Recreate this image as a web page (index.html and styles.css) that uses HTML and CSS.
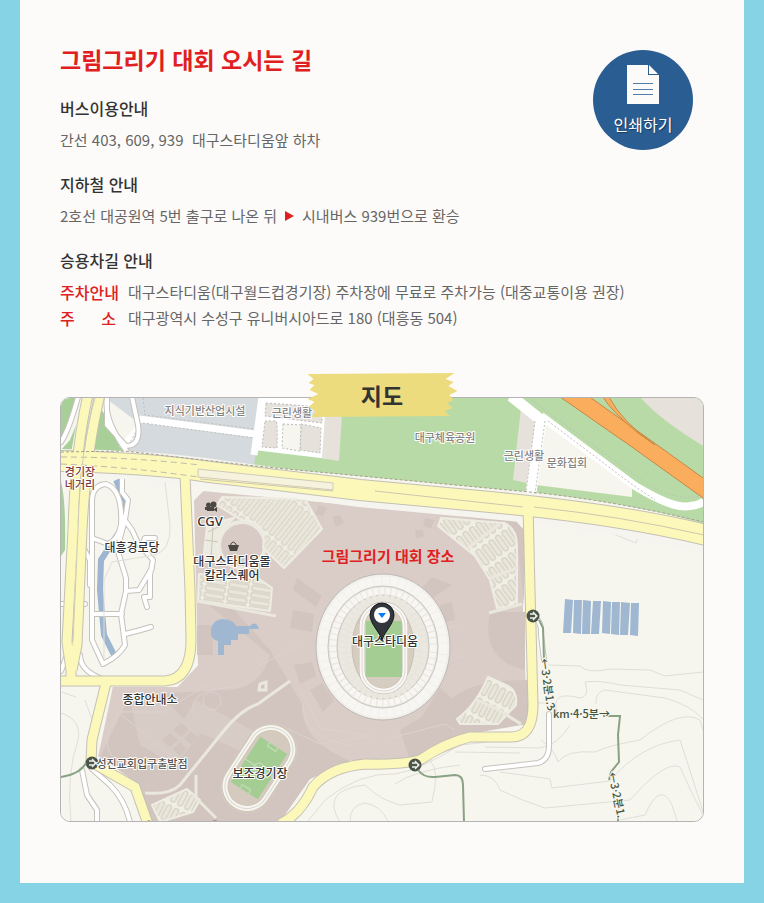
FILE: index.html
```html
<!DOCTYPE html>
<html lang="ko">
<head>
<meta charset="utf-8">
<meta name="viewport" content="width=device-width, initial-scale=1">
<title>그림그리기 대회 오시는 길</title>
<link rel="stylesheet" href="styles.css">
</head>
<body>
<main class="page">
  <div class="intro">
    <div class="intro-text">
      <h1>그림그리기 대회 오시는 길</h1>
      <section class="route">
        <h2>버스이용안내</h2>
        <p>간선 403, 609, 939&nbsp; 대구스타디움앞 하차</p>
      </section>
      <section class="route">
        <h2>지하철 안내</h2>
        <p class="steps"><span>2호선 대공원역 5번 출구로 나온 뒤</span><svg class="arrow" viewBox="0 0 9 10" aria-hidden="true"><path d="M0 0L9 5L0 10Z"/></svg><span>시내버스 939번으로 환승</span></p>
      </section>
    </div>
    <button class="print" type="button">
      <svg class="print-icon" viewBox="0 0 32 39" aria-hidden="true">
        <path class="sheet" d="M0 0H21V10H32V39H0Z"/>
        <path class="sheet" d="M22 0L31 9H22Z"/>
        <path class="rules" d="M6 18.5H26M6 24.5H26M6 29.5H26"/>
      </svg>
      <span>인쇄하기</span>
    </button>
  </div>
  <section class="route">
    <h2>승용차길 안내</h2>
    <dl>
      <dt>주차안내</dt><dd>대구스타디움(대구월드컵경기장) 주차장에 무료로 주차가능 (대중교통이용 권장)</dd>
      <dt class="spread"><span>주</span><span>소</span></dt><dd>대구광역시 수성구 유니버시아드로 180 (대흥동 504)</dd>
    </dl>
  </section>

  <section class="map">
    <div class="tape">
      <svg viewBox="0 0 151 44" aria-hidden="true"><path d="M1 1L148 0L139 6L147 9L142 13L151 18L143 22L147 27L141 30L146 35L138 38L143 43L5 44L9 38L2 34L8 29L1 26L12 21L3 17L8 12L2 10L7 6Z"/></svg>
      <h2>지도</h2>
    </div>
    <svg class="canvas" viewBox="61 398 642 423" role="img" aria-label="대구스타디움 지도">
      <defs>
        <pattern id="lot-a" width="8" height="44" patternUnits="userSpaceOnUse" patternTransform="translate(222 498) rotate(38)"><rect width="8" height="44" fill="#f0efe5"/><rect x="2" y="2" width="5" height="41" rx="1" fill="#e9e6da" stroke="#d2ccbe"/></pattern>
        <pattern id="lot-b" width="23" height="7" patternUnits="userSpaceOnUse" patternTransform="translate(206 577) rotate(9)"><rect width="23" height="7" fill="#f0efe5"/><rect x="1" y="1" width="20" height="5" rx="1" fill="#e9e6da" stroke="#cdc6b8"/></pattern>
        <pattern id="lot-c" width="8" height="22" patternUnits="userSpaceOnUse" patternTransform="translate(440 520) rotate(-36)"><rect width="8" height="22" fill="#f0efe5"/><rect x="2" y="2" width="5" height="18" rx="2" fill="#e9e6da" stroke="#cdc6b8"/></pattern>
        <pattern id="lot-d" width="8" height="20" patternUnits="userSpaceOnUse" patternTransform="translate(487 677) rotate(28)"><rect width="8" height="20" fill="#f0efe5"/><rect x="2" y="2" width="5" height="16" rx="2" fill="#e9e6da" stroke="#cdc6b8"/></pattern>
        <g id="turn"><circle r="6.5" fill="#4b5449"/><path d="M-3-2H2Q4 0 2 2H-3M0-4L4 0L0 4" fill="none" stroke="#eef0e8" stroke-width="1.3"/></g>
      </defs>

      <rect class="land" x="60" y="397" width="645" height="426"/>

      <!-- parks and blocks north of the main road -->
      <path class="park" d="M246 397H705V524Q640 505 540 493L254 466Z"/>
      <path class="block" d="M104 397H264L254 466L122 453L140 424Z"/>
      <path class="park-deep" d="M61 397H77Q72 430 61 442ZM61 450L70 440L76 425L71 453H61ZM97 424L120 453L90 454ZM95 430L102 410L125 453H92ZM61 482Q66 500 65 550L61 556Z"/>
      <path class="white" d="M262 397H343L337 460L254 450Z"/>
      <path class="tan" d="M333 400H343L339 461L322 458L326 400Z"/>
      <path class="tan dotted" d="M266 403L322 407V423L265 416ZM265 421H276Q278 424 277 448L262 447ZM301 424L321 428L320 453L300 450Z"/>
      <path class="land dotted" d="M283 424L301 425L300 451L282 448Z"/>
      <path class="white-road w7" d="M139 419L255 434M262 397L254 455"/>
      <path class="white" d="M138 424L133 440L125 452L119 446Z"/>
      <path class="dash-line" d="M143 398L145 415L255 429M143 423L254 438M125 452L140 424"/>
      <path class="tan" d="M521 408L538 422L527 483L513 480Z"/>
      <path class="tan" d="M640 397Q660 420 705 447V397Z"/>
      <path class="land" d="M545 421L632 487V497L536 485Z"/>
      <path class="white-road w11" d="M511 396L541 420L531 493"/>
      <path class="white-road w8" d="M541 416L635 486Q675 510 690 506Q700 505 704 501"/>
      <path class="dash-line" d="M535 421L526 492M545 421L535 494M548 421L630 483L655 500M527 397L644 482Q675 503 704 495"/>
      <path class="highway-edge" d="M553 392L632 447L710 503L710 483L660 447L580 390Z"/>
      <path class="highway-edge" d="M609 397Q622 422 655 445L638 433Q611 411 603 397Z"/>

      <!-- local roads in the west -->
      <path class="stream" d="M116 480L126 502L124 525L114 540L101 560L100 590L104 635L115 657"/>
      <g class="case"><path id="w1" d="M78 397Q69 430 61 442M107 397Q103 420 128 453M107 397V425L126 446Q141 446 138 425L132 397M125 446L124 455M122 478V492L128 500L125 520L119 542M92 538L108 544Q118 540 121 525Q123 490 106 484Q93 485 92 500V640L103 664Q119 656 125 645L121 614L126 591V578L116 545M125 634L137 631L151 627M121 515L132 530L138 543L153 560L150 575V597H144L147 607M155 538H145L142 545M126 591L139 590L152 568M92 614H122M84 549L90 560V585M61 604H85M61 671L67 655M80 655Q80 670 100 678M82 770L87 795L97 810V822M91 768L110 785Q125 800 130 822"/></g>
      <g class="case-in"><use href="#w1"/></g>
      <path class="thin" d="M165 482L170 525Q171 550 155 555L112 562L104 580V660M62 692L76 697M61 713Q82 720 78 740Q66 775 71 822M85 700L94 725"/>

      <!-- stadium district -->
      <path class="district" d="M193 500L203 490L330 502L516 520L524 530V610L528 724L475 733Q440 745 410 761H350L310 780L280 822H150L138 784L97 757L112 686H177L197 665Z"/>
      <path class="shade" d="M195 600L205 602L270 655Q260 690 225 690L130 695L100 757L140 785L150 822H280L310 779L350 761Q300 740 302 704L270 650L230 605ZM197 625H213V655H197ZM410 761Q470 748 480 732L528 724V680Q470 680 450 700L400 730ZM490 612H525V670Q480 660 490 612ZM437 512L515 520L524 530V605L517 540L505 525Z"/>
      <path class="light" d="M130 700H165L200 735L175 765L140 745ZM196 700L270 740L258 758L180 725Z"/>
      <path class="shade" d="M170 733L178 740L170 747L162 740ZM181 723L189 730L181 737L173 730ZM191 731L198 738L191 745L184 738ZM180 742L187 749L180 756L173 749Z"/>
      <path class="shade" d="M297 578L322 596L316 607L293 590ZM293 610L314 614L312 632L290 628ZM294 665L312 662L316 676L300 684ZM310 690L322 683L334 700L323 712ZM432 577L420 590L430 600L452 585ZM440 605L452 602L455 620L443 623ZM440 688L420 720L436 730L458 705ZM319 505l8 3l-4 8l-8-2ZM332 517l8-2l4 8l-8 4ZM425 518l9 2l-3 9l-8-3ZM415 530l8 0l1 7l-8 1Z"/>
      <path class="path-line" d="M118 715Q100 740 112 756M118 712L170 755M120 712H165L205 685M196 715Q185 700 210 690L240 686M300 690L320 728L370 736L320 744L280 725M303 704Q302 738 350 745M390 738L445 724L455 730M260 665L300 645M424 650L465 657M438 630L460 625"/>
      <circle class="path-line" cx="212" cy="701" r="9"/>
      <path class="pond" d="M211 632Q211 620 223 619Q234 620 236 626L250 626Q256 620 259 629H249V634H238V640H231V645H224V655H218V641Q211 640 211 632Z"/>
      <circle cx="242" cy="545" r="23" fill="#d8cac5" stroke="#eceae0" stroke-width="4"/>
      <path class="lot" fill="url(#lot-a)" d="M222 497L305 499L322 529L284 568L263 548Q268 520 241 520L217 505Z"/>
      <path class="lot" fill="#ecebe0" d="M207 525L221 521L234 518Q220 530 217 545L219 562H203Z"/>
      <path class="path-dark" d="M213 527L211 559M205 540L218 542M208 532L220 526"/>
      <path class="lot" fill="url(#lot-b)" d="M199 574L258 578L272 588L270 611L198 601Z"/>
      <path class="beige" d="M197 601L276 616"/>
      <path class="lot" fill="url(#lot-c)" d="M441 518L505 523Q517 530 517 545V606L497 608L490 580L475 556L438 526Z"/>
      <path class="beige" d="M489 613L522 604M468 548L498 525M490 578L517 568"/>
      <path class="lot" fill="url(#lot-d)" d="M488 677L506 685Q518 690 516 705L498 724H460L457 719Q476 705 488 677Z"/>
      <path class="beige" d="M475 699L497 709L521 724"/>
      <path class="lot" fill="url(#lot-d)" d="M152 805L187 789L200 800L193 812L160 822Z"/>
      <path class="beige" d="M145 793Q170 795 180 785L222 733Q240 710 258 704L290 681M196 775V798L216 818"/>
      <path class="beige" d="M260 684L266 682V690H259Z"/>

      <!-- auxiliary field -->
      <g transform="translate(259 768) rotate(33)">
        <rect x="-26" y="-49" width="52" height="98" rx="26" fill="#d4cabd"/>
        <rect x="-22" y="-44" width="44" height="88" rx="22" fill="#d4cabd" stroke="#c5bfb0" stroke-width="6"/>
        <rect x="-22" y="-44" width="44" height="88" rx="22" fill="none" stroke="#f6f5f0" stroke-width="5"/>
        <rect x="-22" y="-44" width="44" height="88" rx="22" fill="none" stroke="#dcd8ce"/>
        <rect class="field" x="-16" y="-27" width="32" height="54"/>
        <path d="M-16 0H16M-5-27V-23H5V-27M-5 27V23H5V27" fill="none" stroke="#c5dfb9"/><circle r="5" fill="none" stroke="#c5dfb9"/>
      </g>

      <!-- main stadium -->
      <ellipse cx="383" cy="647" rx="67" ry="73" fill="#f1f0ec" stroke="#bdb9b2"/>
      <ellipse class="seats" cx="383" cy="647" rx="60" ry="66" stroke-width="9" stroke-dasharray="7 1"/>
      <ellipse class="ring" cx="383" cy="647" rx="55" ry="61"/>
      <ellipse class="seats" cx="383" cy="647" rx="50" ry="56" stroke-width="7" stroke-dasharray="5 1"/>
      <ellipse class="ring" cx="383" cy="647" rx="46" ry="52"/>
      <ellipse class="seats deep" cx="383" cy="647" rx="41" ry="50" stroke-width="6" stroke-dasharray="4 2"/>
      <ellipse class="seats deep" cx="383" cy="647" rx="34" ry="45" stroke-width="5" stroke-dasharray="3 2"/>
      <ellipse cx="383" cy="647" rx="31" ry="45" fill="#d6ccbf" stroke="#c8c0b4"/>
      <rect x="362" y="605" width="43" height="86" rx="21" fill="#d6ccbf" stroke="#bfb9ad" stroke-width="6"/>
      <rect x="362" y="605" width="43" height="86" rx="21" fill="none" stroke="#f8f7f4" stroke-width="5"/>
      <rect x="362" y="605" width="43" height="86" rx="21" fill="none" stroke="#dedad2"/>
      <rect class="field" x="366" y="621" width="36" height="56"/>

      <!-- eastern lots and hills -->
      <path class="solar" d="M565 599l8 1l-2 33l-8 0ZM574 600l8 0l-1 34l-8-1ZM583 600l8 1l-1 33l-8 0ZM593 601l8 0l-2 33l-8 0ZM603 601l8 1l-1 32l-8-1ZM612 602l8 0l-1 33l-8-1ZM621 602l9 1l-2 32l-8 0ZM631 603l8 0l-1 33l-8-1Z"/>
      <path class="thin" d="M548 665L580 666Q588 674 610 669L650 670L665 676L703 672M557 712Q550 690 580 698Q590 697 585 682Q600 680 620 685L680 690L703 700M596 704Q595 692 605 690L665 698Q690 705 703 719M545 703H530V725Q520 740 460 745Q420 770 395 774Q360 772 325 800L308 821M541 740Q555 750 558 762Q565 750 595 752Q610 745 640 740Q680 708 700 720L703 730M500 772L550 779L552 788L610 781Q640 745 680 740Q690 770 703 812M480 775Q495 775 500 790Q520 800 545 808L630 800Q665 760 680 767Q690 790 703 815M620 820L645 815Q660 780 672 805L677 821M340 822Q320 790 365 785Q380 800 400 805L432 802Q440 770 430 760M350 821Q350 805 365 803Q380 805 388 821M600 528L603 530L636 543L638 536L704 551M395 784Q415 770 460 765"/>
      <path class="thin" d="M485 747L540 748Q558 745 570 725M455 752L520 753"/>
      <g class="case"><path id="w2" d="M485 769L538 763Q550 760 549 743V714M533 617Q542 620 541 635L544 660"/></g>
      <g class="case-in"><use href="#w2"/></g>

      <!-- arterial roads -->
      <path class="road-bed" d="M60 463Q150 464 220 474L360 493L490 505Q620 517 706 540"/>
      <g class="road-edge"><path class="w22" d="M60 461Q150 463 210 472L360 490L490 502Q620 514 706 535"/><path class="w11" d="M89 390Q75 450 73 530L67 642L71 670V680M101 390Q86 450 82 530L77 645L72 670M185 475L190 590L191 640Q191 679 165 681H60M106 683L92 740L91 762L135 787L148 824M528 505L530 590L533 705Q533 738 510 737H470Q445 743 420 760Q400 765 365 764Q330 767 313 787Q300 815 280 824"/></g>
      <g class="road"><path class="w20" d="M60 461Q150 463 210 472L360 490L490 502Q620 514 706 535"/><path class="w9" d="M89 390Q75 450 73 530L67 642L71 670V680M101 390Q86 450 82 530L77 645L72 670M185 475L190 590L191 640Q191 679 165 681H60M106 683L92 740L91 762L135 787L148 824M528 505L530 590L533 705Q533 738 510 737H470Q445 743 420 760Q400 765 365 764Q330 767 313 787Q300 815 280 824"/></g>
      <path class="lane" d="M61 457Q130 457 200 465M61 464Q130 467 198 477"/>
      <path class="lane-split" d="M95 398Q80 450 78 530L73 642"/>
      <path class="land-strip" d="M198 469L333 483V490L198 477Z"/>
      <path class="center" d="M200 479L333 491M375 491L523 507M534 507Q620 516 704 535"/>
      <path class="dash-brown" d="M61 452L125 451L255 466L540 493Q620 502 704 522"/>
      <use href="#turn" x="533" y="616"/><use href="#turn" x="92" y="763"/><use href="#turn" x="415" y="765"/>

      <!-- walking trail -->
      <path class="trail" d="M539 620L543 628L544 660M603 716H620L618 735L619 762L611 772L609 780M618 815V822M86 763Q80 774 61 777M418 770Q424 778 435 777L455 775Q463 775 463 785L464 822"/>
      <g class="trail-text">
        <text transform="translate(540 659) rotate(82)">←3·2분1.</text>
        <text transform="translate(546 707) rotate(50)">3</text>
        <text x="553" y="718">km·4·5분→</text>
        <text transform="translate(608 773) rotate(78)">←3·2분1.</text>
      </g>

      <g class="poi" text-anchor="middle">
        <g class="muted"><text x="205" y="415">지식기반산업시설</text><text x="292" y="417">근린생활</text><text x="445" y="442">대구체육공원</text><text x="524" y="460">근린생활</text><text x="567" y="467">문화집회</text></g>
        <g class="cross"><text x="80" y="476">경기장</text><text x="80" y="489">네거리</text></g>
        <text x="132" y="552">대흥경로당</text>
        <text class="latin" x="210" y="526">CGV</text>
        <text x="232" y="566">대구스타디움몰</text><text x="232" y="580">칼라스퀘어</text>
        <text x="150" y="704">종합안내소</text>
        <text x="260" y="778">보조경기장</text>
        <text x="385" y="646">대구스타디움</text>
        <text class="start" x="142" y="768">성진교회입구출발점</text>
      </g>
      <g fill="#4b4844"><circle cx="208.500" cy="505" r="2.500"/><circle cx="213.500" cy="504.500" r="3"/><path d="M207 507H214V509L217 507V512L214 510V511H207ZM205 507h2v3h-2Z"/><path d="M228 545H239L237 551H230Z"/><path d="M230 546Q233 538 237 546" fill="none" stroke="#4b4844"/></g>
      <text class="venue" x="388" y="562" text-anchor="middle">그림그리기 대회 장소</text>
      <path d="M382 640C380 632 370 624 370 615A12 12 0 0 1 394 615C394 624 384 632 382 640Z" fill="#33363b" stroke="#15171a"/>
      <circle cx="382" cy="615" r="8" fill="#fff"/><path d="M378 613H386L382 618Z" fill="#087cf5"/>
      <path d="M144 823Q149 818 154 823ZM208 823Q215 818 222 823Z" fill="#4b5449"/>
    </svg>
  </section>
</main>
</body>
</html>
```
FILE: styles.css
```css
* { box-sizing: border-box; }
body {
  margin: 0;
  background: #87d3e6;
  color: #666;
  font: 15px/26px "Noto Sans CJK KR", sans-serif;
}
.page {
  margin: 0 20px 20px;
  padding: 43px 40px 61px;
  background: #fcfbf9;
}
h1, h2, p, dl, dd { margin: 0; }
.intro { display: flex; justify-content: space-between; }
h1 {
  margin-bottom: 20px;
  color: #e02020;
  font-size: 23px;
  line-height: 32px;
}
.route { margin-bottom: 18px; }
.route h2 {
  margin-bottom: 6px;
  color: #333;
  font-size: 16px;
  font-weight: 500;
  line-height: 26px;
}
.steps { display: flex; align-items: center; }
.arrow { width: 9px; height: 10px; margin: 0 8px; fill: #e02020; }
dl { display: grid; grid-template-columns: 60px 1fr; column-gap: 8px; }
dt { color: #e02020; font-size: 16px; font-weight: 500; white-space: nowrap; }
.spread { display: flex; justify-content: space-between; padding-right: 4px; }
.print {
  display: flex;
  flex-direction: column;
  flex: none;
  align-items: center;
  width: 100px;
  height: 100px;
  margin: 7px 11px 0 0;
  padding: 15px 0 0;
  border: 0;
  border-radius: 50%;
  background: #2a5d91;
  color: #fff;
  font: inherit;
  font-size: 16px;
  text-shadow: 1px 1px 1px #173c63;
  cursor: pointer;
}
.print-icon { width: 32px; height: 39px; margin-bottom: 7px; }
.sheet { fill: #fcfbf9; }
.rules { stroke: #4f7eab; fill: none; }

.map { position: relative; margin-top: 66px; }
.canvas {
  display: block;
  width: 100%;
  height: auto;
  border: 1px solid #b4b4b4;
  border-radius: 10px;
}
.tape {
  position: absolute;
  top: -24px;
  left: 50%;
  display: grid;
  width: 151px;
  height: 44px;
  transform: translateX(-50%);
  place-items: center;
}
.tape svg { grid-area: 1 / 1; width: 151px; height: 44px; fill: #ecdc7d; }
.tape h2 { z-index: 1; grid-area: 1 / 1; color: #333; font-size: 23px; line-height: 44px; }

.land { fill: #f6f5ee; }
.park { fill: #b8daa7; }
.park-deep { fill: #a8cf98; }
.block { fill: #d5dade; }
.tan { fill: #e6e1da; }
.white { fill: #fff; }
.dotted { stroke: #bbb; stroke-dasharray: 2 2; }
.white-road { fill: none; stroke: #fff; stroke-linejoin: round; }
.w7 { stroke-width: 7; }
.w8 { stroke-width: 8; }
.w9 { stroke-width: 9; }
.w11 { stroke-width: 11; }
.w20 { stroke-width: 20; }
.w22 { stroke-width: 22; }
.dash-line { fill: none; stroke: #bfc0bb; stroke-dasharray: 2 2; }
.highway-edge { fill: #faad5c; stroke: #c48846; }
.stream { fill: none; stroke: #9db5d0; stroke-width: 6; }
.case, .case-in { fill: none; stroke-linecap: round; stroke-linejoin: round; }
.case { stroke: #c4c2bc; stroke-width: 6; }
.case-in { stroke: #fff; stroke-width: 4; }
.thin { fill: none; stroke: #dfdfd8; }
.district { fill: #dacdc8; stroke: #f6f5ee; stroke-width: 2; }
.shade { fill: #d2c5c0; }
.light { fill: #d8ccc7; }
.path-line { fill: none; stroke: #ddd2cd; }
.path-dark { fill: none; stroke: #cdc6b8; }
.pond, .solar { fill: #9fb7d1; }
.lot { stroke: #eeece3; stroke-width: 2; stroke-linejoin: round; }
.beige { fill: none; stroke: #eae8dd; stroke-width: 3; }
.field { fill: #a4cd94; }
.seats { fill: none; stroke: #f7f6f3; }
.deep { stroke: #ebe8df; }
.ring { fill: #e8e5de; stroke: #cbc8c1; }
.road-bed { fill: none; stroke: #f5f4ee; stroke-width: 28; }
.road-edge { fill: none; stroke: #c4c0b4; }
.road { fill: none; stroke: #fcf8ba; }
.lane { fill: none; stroke: #beb9aa; stroke-dasharray: 6 4; }
.lane-split { fill: none; stroke: #cfcbbb; }
.land-strip { fill: #f5f2dd; stroke: #cfcab8; }
.center { fill: none; stroke: #ccc7b0; }
.dash-brown { fill: none; stroke: #a5a089; stroke-dasharray: 3 2; }
.trail { fill: none; stroke: #88a283; stroke-width: 2; }
.trail-text { fill: #42563f; font-size: 11px; font-weight: 500; stroke: #f6f5ee; stroke-width: 2px; paint-order: stroke; }
.poi { fill: #333; font-size: 12px; font-weight: 500; stroke: #fff; stroke-width: 2px; stroke-linejoin: round; paint-order: stroke; }
.muted, .start { font-size: 11px; }
.muted { fill: #85837f; }
.start { fill: #555; }
.cross { fill: #7d3c3c; font-size: 11px; }
.latin { font-family: "Noto Sans", sans-serif; font-size: 13px; }
.venue { fill: #e02020; font-size: 15px; font-weight: 700; }
```
